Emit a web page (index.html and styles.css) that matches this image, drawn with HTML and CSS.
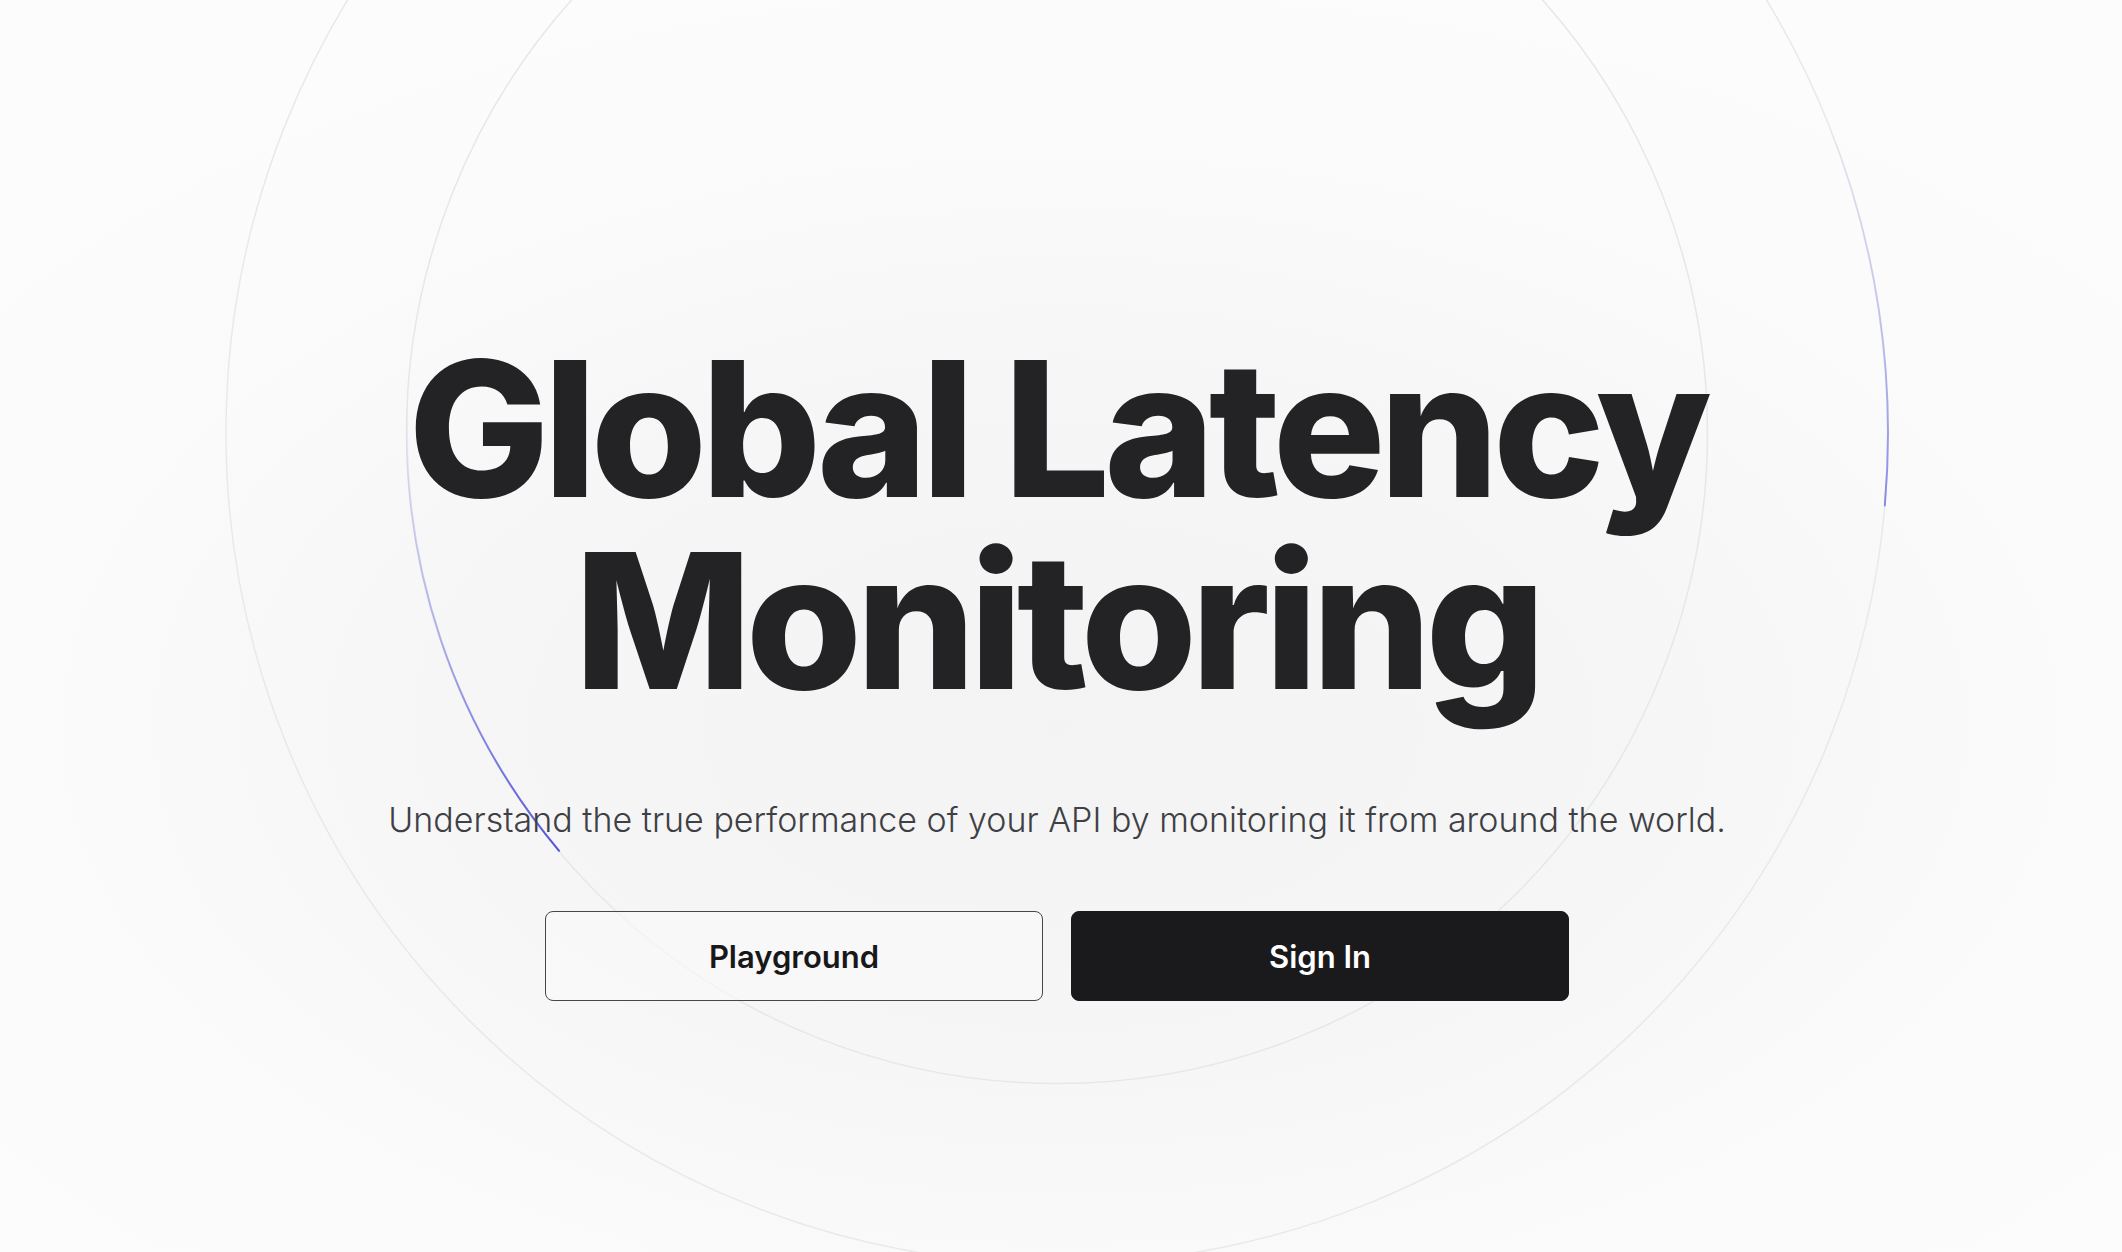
FILE: index.html
```html
<!DOCTYPE html>
<html lang="en">
<head>
<meta charset="utf-8">
<title>Global Latency Monitoring</title>
<link rel="stylesheet" href="styles.css">
</head>
<body>
<div class="backdrop">
  <svg class="orbits" viewBox="0 0 2122 1252" width="2122" height="1252" aria-hidden="true">
    <defs>
      <linearGradient id="tailA" gradientUnits="userSpaceOnUse" x1="408" y1="399" x2="559" y2="851">
        <stop offset="0" stop-color="#5b5fe0" stop-opacity="0"/>
        <stop offset="0.5" stop-color="#5b5fe0" stop-opacity="0.45"/>
        <stop offset="1" stop-color="#4f52d8" stop-opacity="1"/>
      </linearGradient>
      <linearGradient id="tailB" gradientUnits="userSpaceOnUse" x1="1827" y1="122" x2="1884" y2="505">
        <stop offset="0" stop-color="#7b7fe8" stop-opacity="0"/>
        <stop offset="0.5" stop-color="#7b7fe8" stop-opacity="0.35"/>
        <stop offset="1" stop-color="#6d70e4" stop-opacity="0.8"/>
      </linearGradient>
    </defs>
    <circle cx="1057" cy="433" r="831" fill="none" stroke="#e9e9eb" stroke-width="1.5"/>
    <circle cx="1057" cy="433" r="650.5" fill="none" stroke="#e7e7e9" stroke-width="1.5"/>
    <path d="M 407.9 399 A 650.5 650.5 0 0 0 559.1 850.8" fill="none" stroke="url(#tailA)" stroke-width="2" stroke-linecap="round"/>
    <path d="M 1827.5 121.7 A 831 831 0 0 1 1884.8 505.4" fill="none" stroke="url(#tailB)" stroke-width="2" stroke-linecap="round"/>
  </svg>
</div>
<main class="hero">
  <h1 class="title"><span class="title-line">Global Latency</span><span class="title-line">Monitoring</span></h1>
  <p class="lead">Understand the true performance of your API by monitoring it from around the world.</p>
  <div class="actions">
    <a class="btn btn-outline" href="#">Playground</a>
    <a class="btn btn-solid" href="#">Sign In</a>
  </div>
</main>
</body>
</html>
```
FILE: styles.css
```css
html, body {
  margin: 0;
  padding: 0;
  height: 100%;
}

body {
  font-family: Inter, "Noto Sans", "Liberation Sans", sans-serif;
  background: radial-gradient(ellipse 62% 60% at 50% 58%, #f3f3f3 0%, #f6f6f6 45%, #fafafa 75%, #fcfcfc 100%);
  color: #232326;
  overflow: hidden;
  position: relative;
}

.backdrop {
  position: absolute;
  inset: 0;
  pointer-events: none;
  z-index: 0;
}

.orbits {
  display: block;
}

.hero {
  position: relative;
  z-index: 1;
  display: flex;
  flex-direction: column;
  align-items: center;
  padding-top: 333px;
  padding-right: 8px;
}

.title {
  margin: 0;
  display: flex;
  flex-direction: column;
  align-items: center;
  font-size: 188px;
  font-weight: 800;
  letter-spacing: -0.032em;
  text-align: center;
  color: #232326;
}

.title-line {
  display: block;
  height: 192px;
  line-height: 192px;
  white-space: nowrap;
}

.lead {
  margin: 83px 0 0;
  font-size: 34px;
  line-height: 40px;
  font-weight: 300;
  color: #3f3f46;
  text-align: center;
}

.actions {
  margin-top: 71px;
  display: flex;
  gap: 28px;
}

.btn {
  box-sizing: border-box;
  width: 498px;
  height: 90px;
  display: flex;
  align-items: center;
  justify-content: center;
  border-radius: 8px;
  font-size: 31px;
  font-weight: 600;
  text-decoration: none;
}

.btn-outline {
  border: 1.5px solid #46464d;
  color: #18181b;
  background: rgba(250, 250, 250, 0.6);
}

.btn-solid {
  background: #1a1a1c;
  color: #ffffff;
  border: 1.5px solid #1a1a1c;
}
```
